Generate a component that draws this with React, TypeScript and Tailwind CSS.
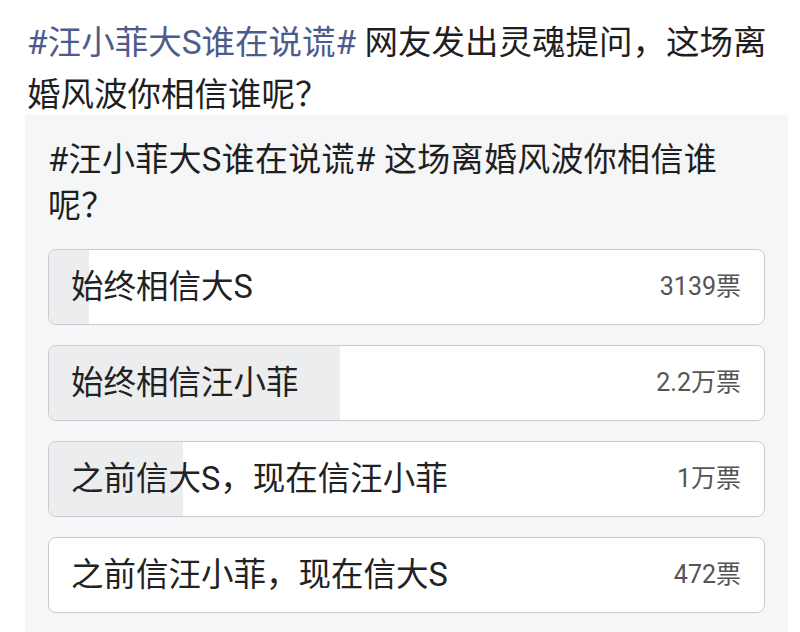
const options = [
  { label: "始终相信大S", votes: "3139票", fill: 40 },
  { label: "始终相信汪小菲", votes: "2.2万票", fill: 291 },
  { label: "之前信大S，现在信汪小菲", votes: "1万票", fill: 134 },
  { label: "之前信汪小菲，现在信大S", votes: "472票", fill: 0 },
  { label: "", votes: "", fill: 240 },
];

const font = { fontFamily: '"Roboto", "Noto Sans CJK SC", sans-serif' };

export default function App() {
  return (
    <div className="w-[800px] h-[632px] overflow-hidden bg-white" style={font}>

      <div className="h-[115px] px-[27px] pt-[17px]">
        <p className="text-[33.5px] leading-[52px] text-[#1f1f1f]">
          <span className="text-[#4d5b8c]">#汪小菲大S谁在说谎#</span> 网友发出灵魂提问，这场离婚风波你相信谁呢？
        </p>
      </div>

      <div className="ml-[25px] w-[763px] bg-[#f5f6f8] px-[23px] pt-[22px]">

        <h2 className="text-[33px] leading-[46px] text-[#1f1f1f] tracking-[0.3px]">
          #汪小菲大S谁在说谎# 这场离婚风波你相信谁
          <br />
          呢？
        </h2>

        <div className="flex flex-col gap-[20px] mt-[20px]">
          {options.map((o, i) => (
            <div
              key={i}
              className="relative h-[76px] rounded-[8px] border border-[#c9cacd] bg-white overflow-hidden flex items-center justify-between pl-[22px] pr-[23px]"
            >
              <div
                className="absolute left-0 top-0 bottom-0 bg-[#ecedef]"
                style={{ width: o.fill }}
              />
              <span className="relative text-[32.5px] text-[#222]">{o.label}</span>
              <span className="relative text-[25px] text-[#555]">{o.votes}</span>
            </div>
          ))}
        </div>

      </div>

    </div>
  );
}
